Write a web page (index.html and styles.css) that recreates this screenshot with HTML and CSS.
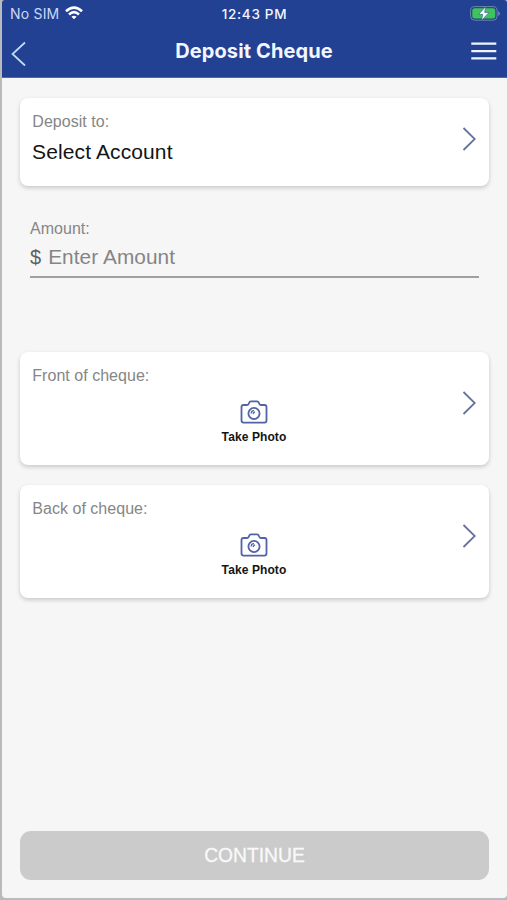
FILE: index.html
```html
<!DOCTYPE html>
<html lang="en">
<head>
<meta charset="utf-8">
<title>Deposit Cheque</title>
<link rel="stylesheet" href="styles.css">
</head>
<body>
<div class="screen">
  <header class="header">
    <div class="status">
      <div class="carrier">
        <span>No SIM</span>
        <svg class="wifi" width="18" height="14" viewBox="0 0 18 14" fill="none" stroke="#fff" stroke-width="2.6"><path d="M1 5.2Q9-2 17 5.2M4 8.4Q9 4 14 8.4"/><path d="M9 13.2L6.4 10.7Q9 8.7 11.6 10.7Z" fill="#fff" stroke="none"/></svg>
      </div>
      <span class="clock">12:43 PM</span>
      <svg class="battery" width="30" height="15" viewBox="0 0 30 15"><rect x=".6" y=".6" width="26.5" height="13.6" rx="4" fill="none" stroke="#6f86a8"/><rect x="2.3" y="2.3" width="23" height="10.3" rx="2.5" fill="#3cc65a"/><path d="M28.3 5v5q1.5-1 1.5-2.5T28.3 5Z" fill="#8391bd"/><path d="M15.7 .6L8.8 8.3h4L11.6 14.4 18.9 6.5h-4.3Z" fill="#fff" stroke="#234193" stroke-width=".5"/></svg>
    </div>
    <div class="nav">
      <svg class="back" width="15" height="26" viewBox="0 0 15 26" fill="none" stroke="#c3dcfa" stroke-width="1.7"><path d="M14 1.5L1.5 13 14 24.5"/></svg>
      <h1 class="title">Deposit Cheque</h1>
      <svg class="menu" width="26" height="20" viewBox="0 0 26 20" stroke="#eef4ff" stroke-width="2.3"><path d="M.3 2.7h25M.3 10.2h25M.3 17.4h25"/></svg>
    </div>
  </header>
  <main class="content">
    <section class="card account">
      <div class="label">Deposit to:</div>
      <div class="value">Select Account</div>
      <svg class="chevron" width="14" height="24" viewBox="0 0 14 24"><path d="M1.5 1l11.3 11L1.5 23"/></svg>
    </section>
    <section class="amount">
      <div class="label">Amount:</div>
      <div class="field"><span class="currency">$</span><span class="placeholder">Enter Amount</span></div>
    </section>
    <section class="card photo">
      <div class="label">Front of cheque:</div>
      <div class="take">
        <svg class="camera" width="28" height="24" viewBox="0 0 28 24"><path d="M3.5 5H7q1.2 0 1.6-1l.6-1.4Q9.6 1.4 11 1.4h6q1.4 0 1.8 1.2l.6 1.4q.4 1 1.6 1h3.5q2 0 2 2v13.6q0 2-2 2h-21q-2 0-2-2V7q0-2 2-2Z"/><circle cx="14" cy="13.5" r="5.6"/><path class="glint" d="M11.2 13.5q0-2.8 2.8-2.8M12.8 13.8l2-2"/></svg>
        <span>Take Photo</span>
      </div>
      <svg class="chevron" width="14" height="24" viewBox="0 0 14 24"><path d="M1.5 1l11.3 11L1.5 23"/></svg>
    </section>
    <section class="card photo">
      <div class="label">Back of cheque:</div>
      <div class="take">
        <svg class="camera" width="28" height="24" viewBox="0 0 28 24"><path d="M3.5 5H7q1.2 0 1.6-1l.6-1.4Q9.6 1.4 11 1.4h6q1.4 0 1.8 1.2l.6 1.4q.4 1 1.6 1h3.5q2 0 2 2v13.6q0 2-2 2h-21q-2 0-2-2V7q0-2 2-2Z"/><circle cx="14" cy="13.5" r="5.6"/><path class="glint" d="M11.2 13.5q0-2.8 2.8-2.8M12.8 13.8l2-2"/></svg>
        <span>Take Photo</span>
      </div>
      <svg class="chevron" width="14" height="24" viewBox="0 0 14 24"><path d="M1.5 1l11.3 11L1.5 23"/></svg>
    </section>
    <button class="continue" type="button">CONTINUE</button>
  </main>
</div>
</body>
</html>
```
FILE: styles.css
```css
* { box-sizing: border-box; }
body { margin: 0; background: #b9babe; font-family: "Liberation Sans", Arial, sans-serif; }
svg { display: block; flex: none; }
.screen { height: 900px; border: solid #b9babe; border-width: 0 0 2px 2px; display: flex; flex-direction: column; }
.header { height: 78px; flex: none; background: #234193; border-radius: 3px 3px 0 0; border-bottom: 1px solid #5069aa; color: #f2f6ff; }
.status { height: 28px; display: grid; grid-template-columns: 1fr auto 1fr; align-items: center; padding: 0 7px 0 8px; font: 500 13.5px/28px Inter, sans-serif; }
.carrier { display: flex; align-items: center; gap: 6px; font-weight: 400; font-size: 14px; letter-spacing: .2px; color: #c9daf8; }
.wifi { margin-top: -2px; }
.clock { letter-spacing: .7px; margin-left: -1px; }
.battery { justify-self: end; margin-top: -1px; }
.nav { height: 49px; display: grid; grid-template-columns: 1fr auto 1fr; align-items: center; padding: 0 10px 3px 9px; }
.title { margin: 0; font: 700 20px/28px Inter, sans-serif; letter-spacing: .12px; }
.back { margin-top: 5px; }
.menu { justify-self: end; }
.content { flex: 1; display: flex; flex-direction: column; padding: 20px 18px 18px; background: #f6f6f6; border-radius: 0 0 4px 4px; }
.card { display: grid; grid-template-columns: 1fr 14px; align-items: center; background: #fff; border-radius: 8px; padding: 0 13px 0 12px; box-shadow: 0 2px 4px rgba(0, 0, 0, .19); }
.label { font-size: 16px; line-height: 20px; letter-spacing: .03px; color: #868686; }
.card .label { padding-left: .3px; }
.chevron { grid-column: 2; grid-row: 1 / 3; fill: none; stroke: #66709f; stroke-width: 1.8; }
.account { height: 88px; grid-template-rows: 20px 28px; row-gap: 6px; padding-top: 14px; align-content: start; }
.account .chevron { margin-top: -1px; }
.value { font-size: 21px; line-height: 28px; letter-spacing: .12px; color: #141414; }
.amount { margin: 33px 10px 0; }
.field { display: flex; gap: 7px; height: 39px; padding-top: 4px; border-bottom: 2px solid #a0a0a0; font-size: 20.8px; line-height: 28px; letter-spacing: .08px; color: #858585; }
.currency { font-size: 20px; letter-spacing: 0; color: #606060; }
.photo { height: 113px; margin-top: 74px; grid-template-rows: 20px 45px; row-gap: 13px; padding-top: 14px; align-content: start; }
.photo + .photo { margin-top: 20px; }
.photo .chevron { margin-top: -4px; }
.take { display: flex; flex-direction: column; align-items: center; padding: 1px 0 0 14px; font-weight: 700; font-size: 12px; line-height: 16px; letter-spacing: .1px; color: #141414; }
.take span { margin-top: 5px; }
.camera { fill: none; stroke: #5263a6; stroke-width: 1.8; }
.camera .glint { stroke-width: 1.3; }
.continue { margin-top: auto; height: 49px; border: 0; border-radius: 11px; background: #cbcbcb; color: #f9f9f9; font: 400 19.3px/49px "Liberation Sans", Arial, sans-serif; padding: 0; -webkit-text-stroke: .3px #f9f9f9; }
```
